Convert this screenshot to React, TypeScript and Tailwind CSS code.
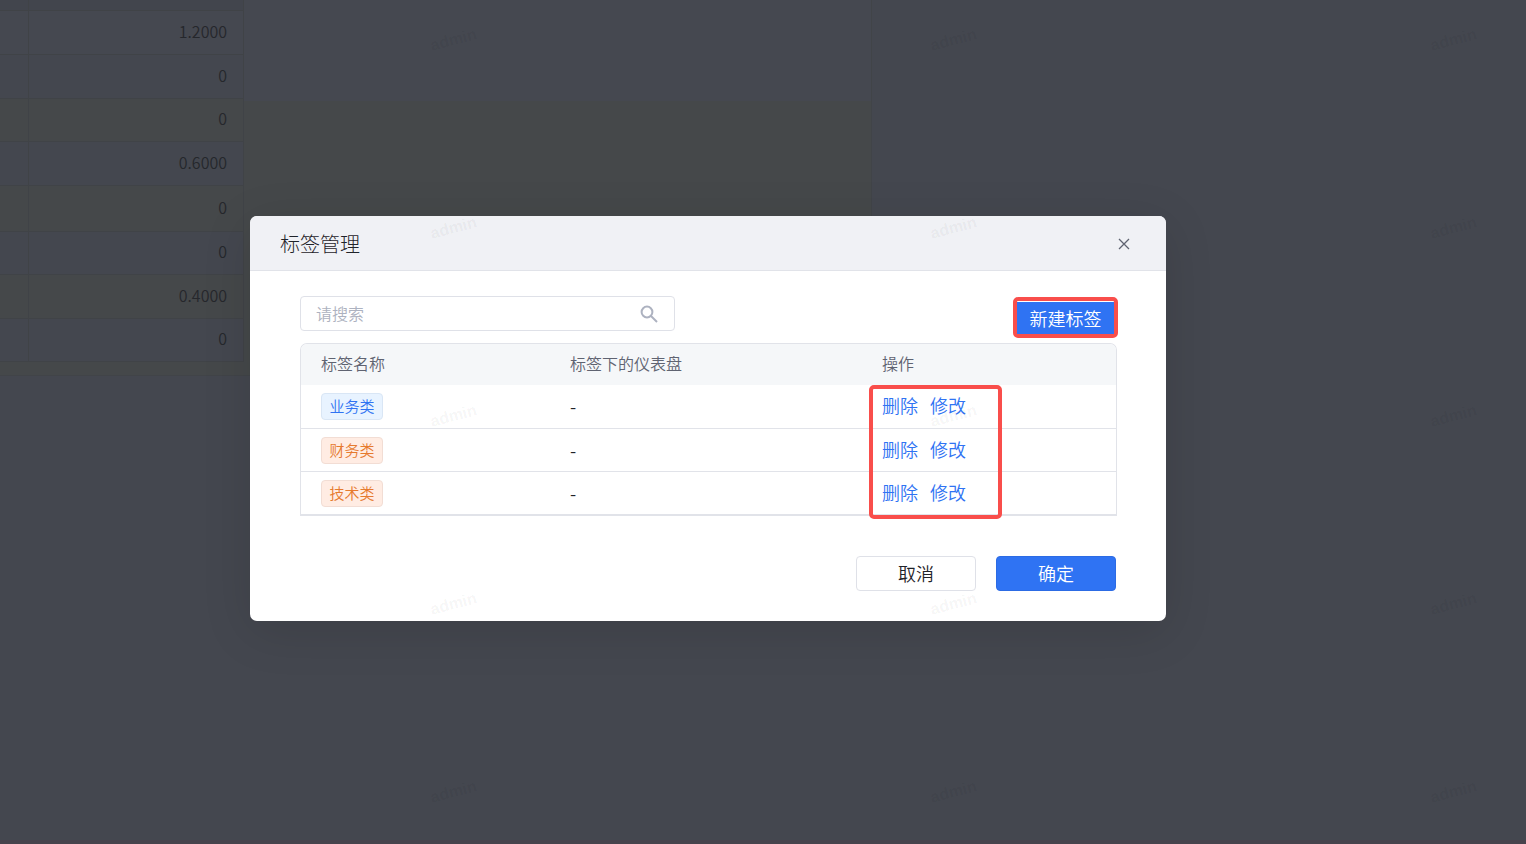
import { useState } from 'react';

const metrics = [
  { value: '1.2000', tone: 'h-[44px] bg-[#454850]' },
  { value: '0', tone: 'h-[44px] bg-[#44474f]' },
  { value: '0', tone: 'h-[43px] bg-[#45484a]' },
  { value: '0.6000', tone: 'h-[44px] bg-[#44474f]' },
  { value: '0', tone: 'h-[46px] bg-[#45484a]' },
  { value: '0', tone: 'h-[43px] bg-[#44474f]' },
  { value: '0.4000', tone: 'h-[44px] bg-[#45484a]' },
  { value: '0', tone: 'h-[43px] bg-[#44474f]' },
];

const tags = [
  { name: '业务类', style: 'border-[#d9e6f5] bg-[#e8f3ff] text-[#2f73f2]' },
  { name: '财务类', style: 'border-[#f2ddd4] bg-[#ffece3] text-[#e67a2e]' },
  { name: '技术类', style: 'border-[#f2ddd4] bg-[#ffece3] text-[#e67a2e]' },
];

function DashboardBackdrop() {
  return (
    <div className="flex h-[376px] w-[872px] flex-col border-r border-b border-[#414448] bg-[linear-gradient(to_bottom,#454850_101px,#45484a_101px)]">
      <table className="w-[244px] border-collapse text-[16px] leading-5 font-[350] text-[#25272c]">
        <tbody>
          <tr className="h-[10px] bg-[#42454d]">
            <td className="w-[28px] border-r border-b border-[#404347] p-0" />
            <td className="border-r border-b border-[#404347] p-0" />
          </tr>
          {metrics.map((row, i) => (
            <tr key={i} className={row.tone}>
              <td className="border-r border-b border-[#404347] p-0" />
              <td className="border-r border-b border-[#404347] pt-0 pr-4 pb-[3px] text-right">{row.value}</td>
            </tr>
          ))}
        </tbody>
      </table>
    </div>
  );
}

function Watermark() {
  return (
    <div
      aria-hidden="true"
      className="pointer-events-none absolute inset-0 grid auto-rows-[188px] grid-cols-[repeat(3,500px)] overflow-hidden pl-[430px]"
    >
      {Array.from({ length: 15 }, (_, i) => (
        <div key={i} className="h-14 pt-[26px]">
          <span className="inline-block -rotate-15 font-['Liberation_Sans',sans-serif] text-[16px] leading-5 font-bold text-black/5">
            admin
          </span>
        </div>
      ))}
    </div>
  );
}

export default function App() {
  const [query, setQuery] = useState('');

  return (
    <div className="relative min-h-screen overflow-hidden border-b-4 border-[#47434c] bg-[#44474f] font-['Noto_Sans_CJK_SC',sans-serif]">
      <DashboardBackdrop />

      <div className="absolute inset-0 pt-[216px] pr-6 pl-[250px]">
        <section
          role="dialog"
          aria-labelledby="dialog-title"
          className="w-full max-w-[916px] rounded-[7px] bg-white font-[350] shadow-[0_10px_50px_rgba(0,0,0,0.12)]"
        >
          <header className="flex h-[55px] items-center justify-between rounded-t-[7px] border-b border-[#e1e3e9] bg-[#f0f1f5] pt-0.5 pr-[35px] pl-[30px]">
            <h2 id="dialog-title" className="text-[20px] leading-7 font-light text-[#1f2329]">
              标签管理
            </h2>
            <button type="button" aria-label="关闭" className="p-px text-[#5f6371]">
              <svg className="size-3" viewBox="0 0 12 12" fill="none" stroke="currentColor" strokeWidth="1.3">
                <path d="M1 1 11 11M11 1 1 11" />
              </svg>
            </button>
          </header>

          <div className="px-[50px] pt-[25px] pb-[30px]">
            <div className="flex items-start justify-between">
              <label className="flex h-[35px] w-[375px] items-center rounded-[4px] border border-[#dfe1e8] pr-4 pl-[15px]">
                <input
                  type="text"
                  aria-label="搜索标签"
                  placeholder="请搜索"
                  value={query}
                  onChange={(e) => setQuery(e.target.value)}
                  className="min-w-0 flex-1 pb-0.5 text-[16px] leading-6 text-[#1f2329] outline-none placeholder:text-[#adb2c0]"
                />
                <svg className="size-[18px] text-[#adb2c0]" viewBox="0 0 18 18" fill="none" stroke="currentColor" strokeWidth="2">
                  <circle cx="7" cy="7" r="5.4" />
                  <path d="m11 11 6 6" />
                </svg>
              </label>
              <div className="-mr-0.5 mt-px rounded-[5px] border-4 border-[#f94e4b] pt-px">
                <button
                  type="button"
                  className="block h-8 w-[97px] bg-[#2f73f3] text-center text-[18px] leading-8 text-white"
                >
                  新建标签
                </button>
              </div>
            </div>

            <div className="relative mt-[5px] -mr-px rounded-t-[7px] border border-b-2 border-[#e1e3e9]">
              <table className="w-full table-fixed border-collapse text-left">
                <colgroup>
                  <col className="w-[249px]" />
                  <col className="w-[312px]" />
                  <col />
                </colgroup>
                <thead>
                  <tr className="h-[41px] text-[16px] leading-6 text-[#5f6371]">
                    <th className="rounded-tl-[6px] bg-[#f5f7f9] pt-0 pb-[3px] pl-5 font-[350]">标签名称</th>
                    <th className="bg-[#f5f7f9] pt-0 pb-[3px] pl-5 font-[350]">标签下的仪表盘</th>
                    <th className="rounded-tr-[6px] bg-[#f5f7f9] pt-0 pb-[3px] pl-5 font-[350]">操作</th>
                  </tr>
                </thead>
                <tbody className="divide-y divide-[#e1e3e9]">
                  {tags.map((tag) => (
                    <tr key={tag.name} className="h-[43px]">
                      <td className="py-0 pl-5">
                        <span
                          className={`inline-block h-[27px] w-[62px] rounded-[4px] border text-center align-middle text-[15px] leading-[23px] ${tag.style}`}
                        >
                          {tag.name}
                        </span>
                      </td>
                      <td className="py-0 pl-5 text-[18px] leading-6 text-[#1f2329]">-</td>
                      <td className="pt-0 pb-0.5 pl-5">
                        <div className="flex gap-3 text-[18px] leading-6 text-[#2f73f3]">
                          <button type="button">删除</button>
                          <button type="button">修改</button>
                        </div>
                      </td>
                    </tr>
                  ))}
                </tbody>
              </table>
              <div className="pointer-events-none absolute top-[41px] left-[568px] h-[134px] w-[133px] rounded-[5px] border-4 border-[#f94e4b]" />
            </div>

            <footer className="mt-10 flex justify-end gap-5 text-[18px] leading-6">
              <button
                type="button"
                className="h-[35px] w-[120px] rounded-[4px] border border-[#dfe1e8] bg-white pb-0.5 text-[#1f2329]"
              >
                取消
              </button>
              <button
                type="button"
                className="h-[35px] w-[120px] rounded-[4px] border border-[#2c6be4] bg-[#2f73f3] pb-0.5 text-white"
              >
                确定
              </button>
            </footer>
          </div>
        </section>
      </div>

      <Watermark />
    </div>
  );
}
